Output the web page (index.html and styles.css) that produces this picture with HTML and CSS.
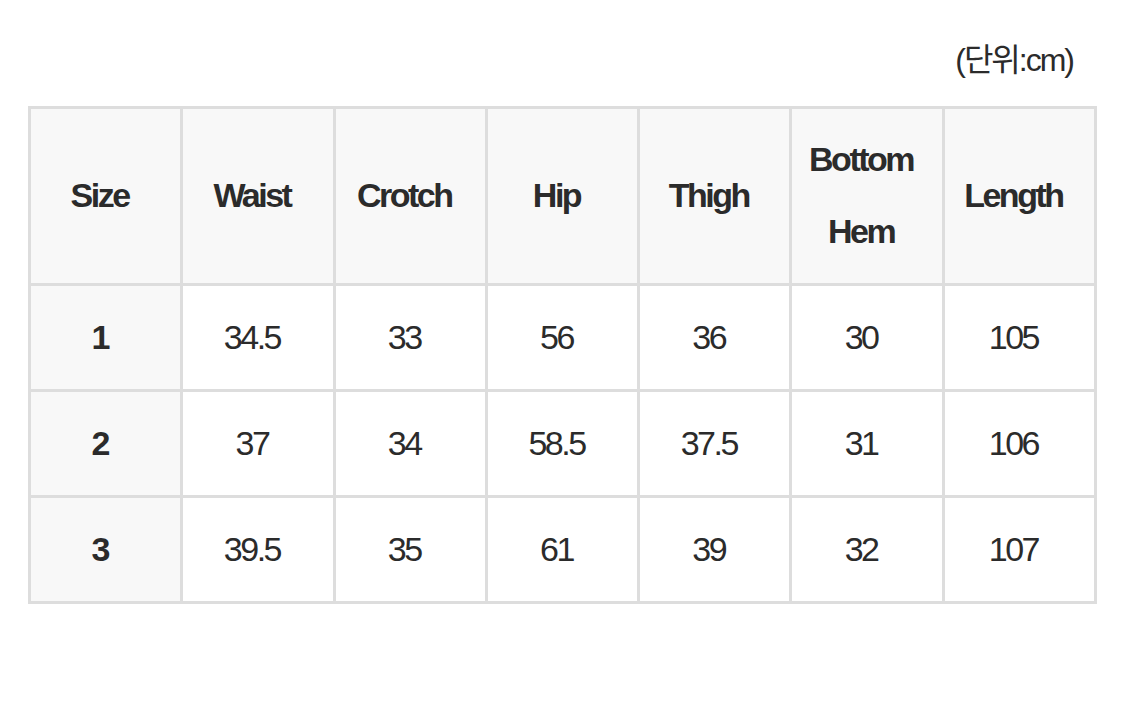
FILE: index.html
```html
<!DOCTYPE html>
<html lang="ko">
<head>
<meta charset="utf-8">
<title>Size chart</title>
<link rel="stylesheet" href="styles.css">
</head>
<body>
<div class="page">
  <div class="unit">(단위:cm)</div>
  <table class="size-table">
    <thead>
      <tr>
        <th>Size</th>
        <th>Waist</th>
        <th>Crotch</th>
        <th>Hip</th>
        <th>Thigh</th>
        <th>Bottom<br>Hem</th>
        <th>Length</th>
      </tr>
    </thead>
    <tbody>
      <tr>
        <th>1</th><td>34.5</td><td>33</td><td>56</td><td>36</td><td>30</td><td>105</td>
      </tr>
      <tr>
        <th>2</th><td>37</td><td>34</td><td>58.5</td><td>37.5</td><td>31</td><td>106</td>
      </tr>
      <tr>
        <th>3</th><td>39.5</td><td>35</td><td>61</td><td>39</td><td>32</td><td>107</td>
      </tr>
    </tbody>
  </table>
</div>
</body>
</html>
```

FILE: styles.css
```css
html, body {
  margin: 0;
  padding: 0;
  background: #ffffff;
}

body {
  font-family: "Liberation Sans", Arial, "Noto Sans CJK KR", sans-serif;
  color: #2b2b2b;
}

.page {
  width: 1069px;
  padding: 41px 0 0 28px;
}

.unit {
  text-align: right;
  font-size: 32px;
  line-height: 38px;
  letter-spacing: -2px;
  padding-right: 24px;
  margin-bottom: 27px;
  color: #2b2b2b;
}

.size-table {
  width: 1069px;
  border-collapse: collapse;
  table-layout: fixed;
}

.size-table th,
.size-table td {
  border: 3px solid #dddddd;
  padding: 14px 12px 16px 0;
  line-height: 72px;
  font-size: 34px;
  letter-spacing: -2.5px;
  text-align: center;
  vertical-align: middle;
}

.size-table tbody th,
.size-table tbody td {
  padding-top: 15px;
  padding-bottom: 16px;
}

.size-table th {
  font-weight: bold;
  background: #f8f8f8;
  color: #2b2b2b;
}

.size-table td {
  font-weight: normal;
  background: #ffffff;
}
```
